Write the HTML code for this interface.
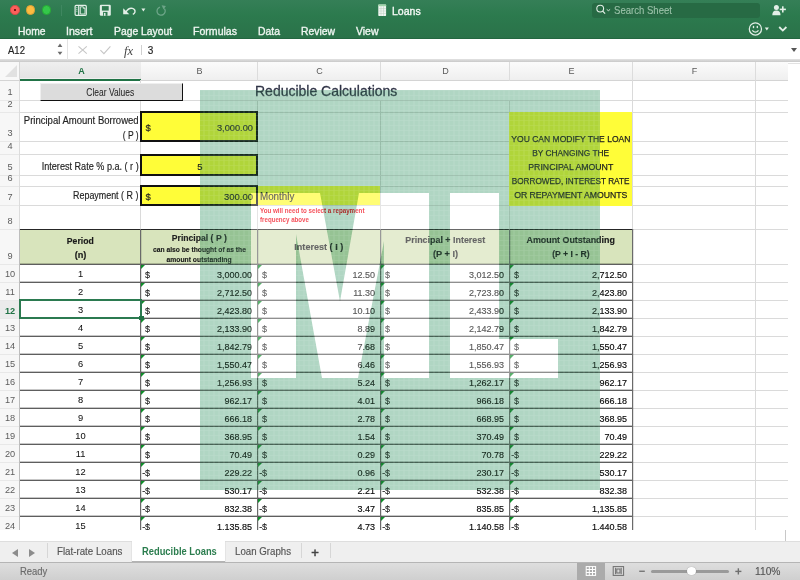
<!DOCTYPE html><html><head><meta charset="utf-8"><style>
*{margin:0;padding:0;box-sizing:border-box}
html,body{width:800px;height:580px;overflow:hidden;background:#fff;font-family:"Liberation Sans", sans-serif;position:relative}
.a{position:absolute}
.t{position:absolute;white-space:pre;line-height:1}
</style></head><body><div class="a" style="left:0px;top:0px;width:800px;height:38px;background:linear-gradient(#357f57,#2c7a4e 40%,#2a7249)"></div>
<div class="a" style="left:0px;top:38px;width:800px;height:1px;background:#236640"></div>
<div class="a" style="left:10.0px;top:5.25px;width:9.5px;height:9.5px;border-radius:50%;background:#fc605c;border:0.5px solid #de4a46"></div>
<div class="a" style="left:25.85px;top:5.25px;width:9.5px;height:9.5px;border-radius:50%;background:#fdbc40;border:0.5px solid #dea236"></div>
<div class="a" style="left:41.5px;top:5.25px;width:9.5px;height:9.5px;border-radius:50%;background:#34c84a;border:0.5px solid #27aa35"></div>
<div class="a" style="left:13.5px;top:8.75px;width:2.5px;height:2.5px;border-radius:50%;background:#4d0000"></div>
<div class="a" style="left:61px;top:4.5px;width:1px;height:11.5px;background:#3f8760"></div>
<div class="t" style="left:17.50px;top:25.51px;font-size:10.5px;color:#eef5f0;transform:scaleX(0.9818);transform-origin:left center;-webkit-text-stroke:0.35px #eef5f0;">Home</div>
<div class="t" style="left:66.00px;top:25.51px;font-size:10.5px;color:#eef5f0;transform:scaleX(1.0091);transform-origin:left center;-webkit-text-stroke:0.35px #eef5f0;">Insert</div>
<div class="t" style="left:113.75px;top:25.51px;font-size:10.5px;color:#eef5f0;transform:scaleX(0.9836);transform-origin:left center;-webkit-text-stroke:0.35px #eef5f0;">Page Layout</div>
<div class="t" style="left:193.20px;top:25.51px;font-size:10.5px;color:#eef5f0;transform:scaleX(1.0055);transform-origin:left center;-webkit-text-stroke:0.35px #eef5f0;">Formulas</div>
<div class="t" style="left:257.80px;top:25.51px;font-size:10.5px;color:#eef5f0;transform:scaleX(0.9919);transform-origin:left center;-webkit-text-stroke:0.35px #eef5f0;">Data</div>
<div class="t" style="left:301.00px;top:25.51px;font-size:10.5px;color:#eef5f0;transform:scaleX(0.9876);transform-origin:left center;-webkit-text-stroke:0.35px #eef5f0;">Review</div>
<div class="t" style="left:355.50px;top:25.51px;font-size:10.5px;color:#eef5f0;transform:scaleX(0.9969);transform-origin:left center;-webkit-text-stroke:0.35px #eef5f0;">View</div>
<div class="t" style="left:392.25px;top:5.69px;font-size:11px;color:#f4f8f5;transform:scaleX(0.9592);transform-origin:left center;-webkit-text-stroke:0.35px #f4f8f5;">Loans</div>
<div class="a" style="left:592px;top:2.5px;width:167.5px;height:15px;border-radius:3px;background:#276a44"></div>
<div class="t" style="left:614.00px;top:4.91px;font-size:10.5px;color:#9cc2aa;transform:scaleX(0.9116);transform-origin:left center;-webkit-text-stroke:0.1px #9cc2aa;">Search Sheet</div>
<div class="a" style="left:791.2px;top:47.8px;width:0;height:0;border-top:4px solid #555;border-left:3px solid transparent;border-right:3px solid transparent"></div>
<div class="a" style="left:788px;top:63px;width:12px;height:1px;background:#e2e2e2"></div>
<div class="a" style="left:0px;top:59px;width:800px;height:3px;background:linear-gradient(#e2e2e2,#c9c9c9)"></div>
<div class="a" style="left:67px;top:39px;width:1px;height:21px;background:#e3e3e3"></div>
<div class="t" style="left:7.80px;top:45.83px;font-size:10px;color:#222;transform:scaleX(0.9554);transform-origin:left center;-webkit-text-stroke:0.15px #222;">A12</div>
<div class="a" style="left:141px;top:45px;width:1px;height:10px;background:#d0d0d0"></div>
<div class="t" style="left:147.75px;top:45.83px;font-size:10px;color:#222;-webkit-text-stroke:0.15px #222;">3</div>
<div class="a" style="left:0px;top:62px;width:788px;height:18px;background:linear-gradient(#fbfbfb,#efefef)"></div>
<div class="a" style="left:0px;top:80px;width:788px;height:1px;background:#d4d4d4"></div>
<div class="a" style="left:140px;top:62px;width:1px;height:18px;background:#dcdcdc"></div>
<div class="a" style="left:257px;top:62px;width:1px;height:18px;background:#dcdcdc"></div>
<div class="a" style="left:380px;top:62px;width:1px;height:18px;background:#dcdcdc"></div>
<div class="a" style="left:509px;top:62px;width:1px;height:18px;background:#dcdcdc"></div>
<div class="a" style="left:632px;top:62px;width:1px;height:18px;background:#dcdcdc"></div>
<div class="a" style="left:755px;top:62px;width:1px;height:18px;background:#dcdcdc"></div>
<div class="t" style="left:196.50px;top:66.98px;font-size:9px;color:#5a5a5a;">B</div>
<div class="t" style="left:316.25px;top:66.98px;font-size:9px;color:#5a5a5a;">C</div>
<div class="t" style="left:442.25px;top:66.98px;font-size:9px;color:#5a5a5a;">D</div>
<div class="t" style="left:568.50px;top:66.98px;font-size:9px;color:#5a5a5a;">E</div>
<div class="t" style="left:691.75px;top:66.98px;font-size:9px;color:#5a5a5a;">F</div>
<div class="a" style="left:20px;top:62px;width:121px;height:16px;background:linear-gradient(#efefef,#e4e4e4)"></div>
<div class="a" style="left:0px;top:62px;width:19px;height:18px;background:#f8f8f8"></div>
<div class="a" style="left:5.4px;top:65.4px;width:0;height:0;border-bottom:12.8px solid #e1e1e1;border-left:12.5px solid transparent"></div>
<div class="t" style="left:78.25px;top:66.78px;font-size:9px;color:#217346;font-weight:bold;">A</div>
<div class="a" style="left:20px;top:78.5px;width:121px;height:2px;background:#217346"></div>
<div class="a" style="left:19px;top:62px;width:1px;height:18px;background:#d6d6d6"></div>
<div class="a" style="left:20px;top:100px;width:768px;height:1px;background:#dadada"></div>
<div class="a" style="left:20px;top:112px;width:768px;height:1px;background:#dadada"></div>
<div class="a" style="left:20px;top:141px;width:768px;height:1px;background:#dadada"></div>
<div class="a" style="left:20px;top:154px;width:768px;height:1px;background:#dadada"></div>
<div class="a" style="left:20px;top:175px;width:768px;height:1px;background:#dadada"></div>
<div class="a" style="left:20px;top:186px;width:768px;height:1px;background:#dadada"></div>
<div class="a" style="left:20px;top:205px;width:768px;height:1px;background:#dadada"></div>
<div class="a" style="left:20px;top:229px;width:768px;height:1px;background:#dadada"></div>
<div class="a" style="left:20px;top:264px;width:768px;height:1px;background:#dadada"></div>
<div class="a" style="left:20px;top:282px;width:768px;height:1px;background:#dadada"></div>
<div class="a" style="left:20px;top:300px;width:768px;height:1px;background:#dadada"></div>
<div class="a" style="left:20px;top:318px;width:768px;height:1px;background:#dadada"></div>
<div class="a" style="left:20px;top:336px;width:768px;height:1px;background:#dadada"></div>
<div class="a" style="left:20px;top:354px;width:768px;height:1px;background:#dadada"></div>
<div class="a" style="left:20px;top:372px;width:768px;height:1px;background:#dadada"></div>
<div class="a" style="left:20px;top:390px;width:768px;height:1px;background:#dadada"></div>
<div class="a" style="left:20px;top:408px;width:768px;height:1px;background:#dadada"></div>
<div class="a" style="left:20px;top:426px;width:768px;height:1px;background:#dadada"></div>
<div class="a" style="left:20px;top:444px;width:768px;height:1px;background:#dadada"></div>
<div class="a" style="left:20px;top:462px;width:768px;height:1px;background:#dadada"></div>
<div class="a" style="left:20px;top:480px;width:768px;height:1px;background:#dadada"></div>
<div class="a" style="left:20px;top:498px;width:768px;height:1px;background:#dadada"></div>
<div class="a" style="left:20px;top:516px;width:768px;height:1px;background:#dadada"></div>
<div class="a" style="left:20px;top:534px;width:768px;height:1px;background:#dadada"></div>
<div class="a" style="left:140px;top:80px;width:1px;height:450px;background:#dadada"></div>
<div class="a" style="left:257px;top:80px;width:1px;height:450px;background:#dadada"></div>
<div class="a" style="left:380px;top:80px;width:1px;height:450px;background:#dadada"></div>
<div class="a" style="left:509px;top:80px;width:1px;height:450px;background:#dadada"></div>
<div class="a" style="left:632px;top:80px;width:1px;height:450px;background:#dadada"></div>
<div class="a" style="left:755px;top:80px;width:1px;height:450px;background:#dadada"></div>
<div class="a" style="left:0px;top:81px;width:20px;height:449px;background:#f7f7f7"></div>
<div class="a" style="left:19px;top:81px;width:1px;height:449px;background:#dcdcdc"></div>
<div class="a" style="left:0px;top:100px;width:19px;height:1px;background:#e8e8e8"></div>
<div class="t" style="left:7.44px;top:88.41px;font-size:9.2px;color:#5c5c5c;">1</div>
<div class="a" style="left:0px;top:112px;width:19px;height:1px;background:#e8e8e8"></div>
<div class="t" style="left:7.44px;top:100.41px;font-size:9.2px;color:#5c5c5c;">2</div>
<div class="a" style="left:0px;top:141px;width:19px;height:1px;background:#e8e8e8"></div>
<div class="t" style="left:7.44px;top:129.41px;font-size:9.2px;color:#5c5c5c;">3</div>
<div class="a" style="left:0px;top:154px;width:19px;height:1px;background:#e8e8e8"></div>
<div class="t" style="left:7.44px;top:142.41px;font-size:9.2px;color:#5c5c5c;">4</div>
<div class="a" style="left:0px;top:175px;width:19px;height:1px;background:#e8e8e8"></div>
<div class="t" style="left:7.44px;top:163.41px;font-size:9.2px;color:#5c5c5c;">5</div>
<div class="a" style="left:0px;top:186px;width:19px;height:1px;background:#e8e8e8"></div>
<div class="t" style="left:7.44px;top:174.41px;font-size:9.2px;color:#5c5c5c;">6</div>
<div class="a" style="left:0px;top:205px;width:19px;height:1px;background:#e8e8e8"></div>
<div class="t" style="left:7.44px;top:193.41px;font-size:9.2px;color:#5c5c5c;">7</div>
<div class="a" style="left:0px;top:229px;width:19px;height:1px;background:#e8e8e8"></div>
<div class="t" style="left:7.44px;top:217.41px;font-size:9.2px;color:#5c5c5c;">8</div>
<div class="a" style="left:0px;top:264px;width:19px;height:1px;background:#e8e8e8"></div>
<div class="t" style="left:7.44px;top:252.41px;font-size:9.2px;color:#5c5c5c;">9</div>
<div class="a" style="left:0px;top:282px;width:19px;height:1px;background:#e8e8e8"></div>
<div class="t" style="left:4.88px;top:270.41px;font-size:9.2px;color:#5c5c5c;">10</div>
<div class="a" style="left:0px;top:300px;width:19px;height:1px;background:#e8e8e8"></div>
<div class="t" style="left:5.22px;top:288.41px;font-size:9.2px;color:#5c5c5c;">11</div>
<div class="a" style="left:0px;top:301px;width:19px;height:17px;background:#ebebeb"></div>
<div class="a" style="left:0px;top:318px;width:19px;height:1px;background:#e8e8e8"></div>
<div class="t" style="left:4.88px;top:306.61px;font-size:9.2px;color:#217346;font-weight:bold;">12</div>
<div class="a" style="left:0px;top:336px;width:19px;height:1px;background:#e8e8e8"></div>
<div class="t" style="left:4.88px;top:324.41px;font-size:9.2px;color:#5c5c5c;">13</div>
<div class="a" style="left:0px;top:354px;width:19px;height:1px;background:#e8e8e8"></div>
<div class="t" style="left:4.88px;top:342.41px;font-size:9.2px;color:#5c5c5c;">14</div>
<div class="a" style="left:0px;top:372px;width:19px;height:1px;background:#e8e8e8"></div>
<div class="t" style="left:4.88px;top:360.41px;font-size:9.2px;color:#5c5c5c;">15</div>
<div class="a" style="left:0px;top:390px;width:19px;height:1px;background:#e8e8e8"></div>
<div class="t" style="left:4.88px;top:378.41px;font-size:9.2px;color:#5c5c5c;">16</div>
<div class="a" style="left:0px;top:408px;width:19px;height:1px;background:#e8e8e8"></div>
<div class="t" style="left:4.88px;top:396.41px;font-size:9.2px;color:#5c5c5c;">17</div>
<div class="a" style="left:0px;top:426px;width:19px;height:1px;background:#e8e8e8"></div>
<div class="t" style="left:4.88px;top:414.41px;font-size:9.2px;color:#5c5c5c;">18</div>
<div class="a" style="left:0px;top:444px;width:19px;height:1px;background:#e8e8e8"></div>
<div class="t" style="left:4.88px;top:432.41px;font-size:9.2px;color:#5c5c5c;">19</div>
<div class="a" style="left:0px;top:462px;width:19px;height:1px;background:#e8e8e8"></div>
<div class="t" style="left:4.88px;top:450.41px;font-size:9.2px;color:#5c5c5c;">20</div>
<div class="a" style="left:0px;top:480px;width:19px;height:1px;background:#e8e8e8"></div>
<div class="t" style="left:4.88px;top:468.41px;font-size:9.2px;color:#5c5c5c;">21</div>
<div class="a" style="left:0px;top:498px;width:19px;height:1px;background:#e8e8e8"></div>
<div class="t" style="left:4.88px;top:486.41px;font-size:9.2px;color:#5c5c5c;">22</div>
<div class="a" style="left:0px;top:516px;width:19px;height:1px;background:#e8e8e8"></div>
<div class="t" style="left:4.88px;top:504.41px;font-size:9.2px;color:#5c5c5c;">23</div>
<div class="a" style="left:0px;top:534px;width:19px;height:1px;background:#e8e8e8"></div>
<div class="t" style="left:4.88px;top:522.41px;font-size:9.2px;color:#5c5c5c;">24</div>
<div class="a" style="left:200px;top:81px;width:400px;height:19px;background:#fff"></div>
<div class="a" style="left:39.6px;top:83.3px;width:143px;height:18.1px;background:#dcdcdc;border-top:1px solid #efefef;border-left:1px solid #efefef;border-right:1.5px solid #111;border-bottom:1.5px solid #111"></div>
<div class="t" style="left:81.94px;top:87.83px;font-size:10px;color:#262626;transform:scaleX(0.8459);transform-origin:center center;-webkit-text-stroke:0.05px #262626;">Clear Values</div>
<div class="t" style="left:254.90px;top:82.70px;font-size:15px;color:#2e3245;transform:scaleX(0.9326);transform-origin:left center;-webkit-text-stroke:0.3px #2e3245;">Reducible Calculations</div>
<div class="t" style="left:17.68px;top:115.94px;font-size:10px;color:#222;transform:scaleX(0.9517);transform-origin:right center;-webkit-text-stroke:0.15px #222;">Principal Amount Borrowed</div>
<div class="t" style="left:119.59px;top:130.53px;font-size:10px;color:#222;transform:scaleX(0.8553);transform-origin:right center;-webkit-text-stroke:0.15px #222;">( P )</div>
<div class="t" style="left:31.60px;top:161.53px;font-size:10px;color:#222;transform:scaleX(0.9091);transform-origin:right center;-webkit-text-stroke:0.15px #222;">Interest Rate % p.a. ( r )</div>
<div class="t" style="left:64.94px;top:190.94px;font-size:10px;color:#222;transform:scaleX(0.8902);transform-origin:right center;-webkit-text-stroke:0.15px #222;">Repayment ( R )</div>
<div class="a" style="left:140px;top:111px;width:118px;height:31px;background:#fffd38;border:2px solid #111"></div>
<div class="a" style="left:140px;top:154px;width:118px;height:22px;background:#fffd38;border:2px solid #111"></div>
<div class="a" style="left:140px;top:185px;width:118px;height:21px;background:#fffd38;border:2px solid #111"></div>
<div class="t" style="left:145.50px;top:123.16px;font-size:9.5px;color:#222;-webkit-text-stroke:0.15px #222;">$</div>
<div class="t" style="left:216.02px;top:123.16px;font-size:9.5px;color:#222;transform:scaleX(0.9735);transform-origin:right center;-webkit-text-stroke:0.15px #222;">3,000.00</div>
<div class="t" style="left:197.16px;top:161.96px;font-size:9.5px;color:#222;-webkit-text-stroke:0.15px #222;">5</div>
<div class="t" style="left:145.50px;top:191.96px;font-size:9.5px;color:#222;-webkit-text-stroke:0.15px #222;">$</div>
<div class="t" style="left:223.94px;top:191.96px;font-size:9.5px;color:#222;-webkit-text-stroke:0.15px #222;">300.00</div>
<div class="a" style="left:258px;top:186px;width:122px;height:18.5px;background:#fffd38"></div>
<div class="t" style="left:260.30px;top:192.03px;font-size:10px;color:#222;transform:scaleX(0.9796);transform-origin:left center;-webkit-text-stroke:0.15px #222;">Monthly</div>
<div class="t" style="left:260.00px;top:208.04px;font-size:6.8px;color:#f00010;font-weight:bold;transform:scaleX(0.9136);transform-origin:left center;">You will need to select a repayment</div>
<div class="t" style="left:260.00px;top:217.24px;font-size:6.8px;color:#f00010;font-weight:bold;transform:scaleX(0.9067);transform-origin:left center;">frequency above</div>
<div class="a" style="left:509px;top:112px;width:123px;height:93.5px;background:#fffd38"></div>
<div class="t" style="left:508.15px;top:134.58px;font-size:9px;color:#1e1e1e;transform:scaleX(0.9468);transform-origin:center center;-webkit-text-stroke:0.25px #1e1e1e;">YOU CAN MODIFY THE LOAN</div>
<div class="t" style="left:529.41px;top:148.78px;font-size:9px;color:#1e1e1e;transform:scaleX(0.9244);transform-origin:center center;-webkit-text-stroke:0.25px #1e1e1e;">BY CHANGING THE</div>
<div class="t" style="left:527.24px;top:162.98px;font-size:9px;color:#1e1e1e;transform:scaleX(0.9713);transform-origin:center center;-webkit-text-stroke:0.25px #1e1e1e;">PRINCIPAL AMOUNT</div>
<div class="t" style="left:506.41px;top:177.18px;font-size:9px;color:#1e1e1e;transform:scaleX(0.9111);transform-origin:center center;-webkit-text-stroke:0.25px #1e1e1e;">BORROWED, INTEREST RATE</div>
<div class="t" style="left:512.24px;top:191.38px;font-size:9px;color:#1e1e1e;transform:scaleX(0.9637);transform-origin:center center;-webkit-text-stroke:0.25px #1e1e1e;">OR REPAYMENT AMOUNTS</div>
<div class="a" style="left:20px;top:229px;width:612px;height:35px;background:#d8e4bc"></div>
<div class="a" style="left:20px;top:228.6px;width:613px;height:1.4px;background:#262626"></div>
<div class="a" style="left:20px;top:264px;width:613px;height:1px;background:#5e5e5e"></div>
<div class="a" style="left:20px;top:263px;width:613px;height:1px;background:rgba(0,0,0,0.22)"></div>
<div class="a" style="left:20px;top:282px;width:613px;height:1px;background:#5e5e5e"></div>
<div class="a" style="left:20px;top:281px;width:613px;height:1px;background:rgba(0,0,0,0.22)"></div>
<div class="a" style="left:20px;top:300px;width:613px;height:1px;background:#5e5e5e"></div>
<div class="a" style="left:20px;top:299px;width:613px;height:1px;background:rgba(0,0,0,0.22)"></div>
<div class="a" style="left:20px;top:318px;width:613px;height:1px;background:#5e5e5e"></div>
<div class="a" style="left:20px;top:317px;width:613px;height:1px;background:rgba(0,0,0,0.22)"></div>
<div class="a" style="left:20px;top:336px;width:613px;height:1px;background:#5e5e5e"></div>
<div class="a" style="left:20px;top:335px;width:613px;height:1px;background:rgba(0,0,0,0.22)"></div>
<div class="a" style="left:20px;top:354px;width:613px;height:1px;background:#5e5e5e"></div>
<div class="a" style="left:20px;top:353px;width:613px;height:1px;background:rgba(0,0,0,0.22)"></div>
<div class="a" style="left:20px;top:372px;width:613px;height:1px;background:#5e5e5e"></div>
<div class="a" style="left:20px;top:371px;width:613px;height:1px;background:rgba(0,0,0,0.22)"></div>
<div class="a" style="left:20px;top:390px;width:613px;height:1px;background:#5e5e5e"></div>
<div class="a" style="left:20px;top:389px;width:613px;height:1px;background:rgba(0,0,0,0.22)"></div>
<div class="a" style="left:20px;top:408px;width:613px;height:1px;background:#5e5e5e"></div>
<div class="a" style="left:20px;top:407px;width:613px;height:1px;background:rgba(0,0,0,0.22)"></div>
<div class="a" style="left:20px;top:426px;width:613px;height:1px;background:#5e5e5e"></div>
<div class="a" style="left:20px;top:425px;width:613px;height:1px;background:rgba(0,0,0,0.22)"></div>
<div class="a" style="left:20px;top:444px;width:613px;height:1px;background:#5e5e5e"></div>
<div class="a" style="left:20px;top:443px;width:613px;height:1px;background:rgba(0,0,0,0.22)"></div>
<div class="a" style="left:20px;top:462px;width:613px;height:1px;background:#5e5e5e"></div>
<div class="a" style="left:20px;top:461px;width:613px;height:1px;background:rgba(0,0,0,0.22)"></div>
<div class="a" style="left:20px;top:480px;width:613px;height:1px;background:#5e5e5e"></div>
<div class="a" style="left:20px;top:479px;width:613px;height:1px;background:rgba(0,0,0,0.22)"></div>
<div class="a" style="left:20px;top:498px;width:613px;height:1px;background:#5e5e5e"></div>
<div class="a" style="left:20px;top:497px;width:613px;height:1px;background:rgba(0,0,0,0.22)"></div>
<div class="a" style="left:20px;top:516px;width:613px;height:1px;background:#5e5e5e"></div>
<div class="a" style="left:20px;top:515px;width:613px;height:1px;background:rgba(0,0,0,0.22)"></div>
<div class="a" style="left:20px;top:534px;width:613px;height:1px;background:#5e5e5e"></div>
<div class="a" style="left:20px;top:533px;width:613px;height:1px;background:rgba(0,0,0,0.22)"></div>
<div class="a" style="left:140px;top:229px;width:1px;height:301px;background:#6a6a6a"></div>
<div class="a" style="left:141px;top:229px;width:1px;height:301px;background:rgba(0,0,0,0.12)"></div>
<div class="a" style="left:257px;top:229px;width:1px;height:301px;background:#6a6a6a"></div>
<div class="a" style="left:258px;top:229px;width:1px;height:301px;background:rgba(0,0,0,0.12)"></div>
<div class="a" style="left:380px;top:229px;width:1px;height:301px;background:#6a6a6a"></div>
<div class="a" style="left:381px;top:229px;width:1px;height:301px;background:rgba(0,0,0,0.12)"></div>
<div class="a" style="left:509px;top:229px;width:1px;height:301px;background:#6a6a6a"></div>
<div class="a" style="left:510px;top:229px;width:1px;height:301px;background:rgba(0,0,0,0.12)"></div>
<div class="a" style="left:632px;top:229px;width:1px;height:301px;background:#6a6a6a"></div>
<div class="a" style="left:633px;top:229px;width:1px;height:301px;background:rgba(0,0,0,0.12)"></div>
<div class="a" style="left:19px;top:229px;width:1px;height:301px;background:#bdbdbd"></div>
<div class="t" style="left:66.19px;top:236.81px;font-size:9.2px;color:#1a1a1a;font-weight:bold;transform:scaleX(0.9431);transform-origin:center center;-webkit-text-stroke:0.15px #1a1a1a;">Period</div>
<div class="t" style="left:74.63px;top:250.81px;font-size:9.2px;color:#1a1a1a;font-weight:bold;-webkit-text-stroke:0.15px #1a1a1a;">(n)</div>
<div class="t" style="left:169.23px;top:232.66px;font-size:9.5px;color:#222;font-weight:bold;transform:scaleX(0.9086);transform-origin:center center;-webkit-text-stroke:0.15px #222;">Principal ( P )</div>
<div class="t" style="left:148.75px;top:245.62px;font-size:7.3px;color:#1a1a1a;font-weight:bold;transform:scaleX(0.9208);transform-origin:center center;-webkit-text-stroke:0.15px #1a1a1a;">can also be thought of as the</div>
<div class="t" style="left:164.42px;top:255.82px;font-size:7.3px;color:#1a1a1a;font-weight:bold;transform:scaleX(0.9265);transform-origin:center center;-webkit-text-stroke:0.15px #1a1a1a;">amount outstanding</div>
<div class="t" style="left:294.21px;top:243.21px;font-size:9.2px;color:#222;font-weight:bold;transform:scaleX(0.9882);transform-origin:center center;-webkit-text-stroke:0.15px #222;">Interest ( I )</div>
<div class="t" style="left:403.71px;top:235.71px;font-size:9.2px;color:#222;font-weight:bold;transform:scaleX(0.9688);transform-origin:center center;-webkit-text-stroke:0.15px #222;">Principal + Interest</div>
<div class="t" style="left:432.93px;top:249.71px;font-size:9.2px;color:#222;font-weight:bold;-webkit-text-stroke:0.15px #222;">(P + I)</div>
<div class="t" style="left:524.76px;top:236.41px;font-size:9.2px;color:#1a1a1a;font-weight:bold;transform:scaleX(0.9675);transform-origin:center center;-webkit-text-stroke:0.15px #1a1a1a;">Amount Outstanding</div>
<div class="t" style="left:550.52px;top:250.41px;font-size:9.2px;color:#1a1a1a;font-weight:bold;transform:scaleX(0.9385);transform-origin:center center;-webkit-text-stroke:0.15px #1a1a1a;">(P + I - R)</div>
<div class="t" style="left:77.91px;top:270.13px;font-size:9.3px;color:#111;-webkit-text-stroke:0.05px #111;">1</div>
<div class="a" style="left:141px;top:265px;width:0;height:0;border-top:4.5px solid #0f8d2a;border-right:4.5px solid transparent"></div>
<div class="t" style="left:145.00px;top:270.98px;font-size:9px;color:#222;-webkit-text-stroke:0.12px #222;">$</div>
<div class="t" style="left:216.97px;top:270.98px;font-size:9px;color:#0a0a0a;-webkit-text-stroke:0.15px #0a0a0a;">3,000.00</div>
<div class="a" style="left:258px;top:265px;width:0;height:0;border-top:4.5px solid #0f8d2a;border-right:4.5px solid transparent"></div>
<div class="t" style="left:262.00px;top:270.98px;font-size:9px;color:#222;-webkit-text-stroke:0.12px #222;">$</div>
<div class="t" style="left:352.48px;top:270.98px;font-size:9px;color:#0a0a0a;-webkit-text-stroke:0.15px #0a0a0a;">12.50</div>
<div class="a" style="left:381px;top:265px;width:0;height:0;border-top:4.5px solid #0f8d2a;border-right:4.5px solid transparent"></div>
<div class="t" style="left:385.00px;top:270.98px;font-size:9px;color:#222;-webkit-text-stroke:0.12px #222;">$</div>
<div class="t" style="left:468.97px;top:270.98px;font-size:9px;color:#0a0a0a;-webkit-text-stroke:0.15px #0a0a0a;">3,012.50</div>
<div class="a" style="left:510px;top:265px;width:0;height:0;border-top:4.5px solid #0f8d2a;border-right:4.5px solid transparent"></div>
<div class="t" style="left:514.00px;top:270.98px;font-size:9px;color:#222;-webkit-text-stroke:0.12px #222;">$</div>
<div class="t" style="left:591.97px;top:270.98px;font-size:9px;color:#0a0a0a;-webkit-text-stroke:0.15px #0a0a0a;">2,712.50</div>
<div class="t" style="left:77.91px;top:288.13px;font-size:9.3px;color:#111;-webkit-text-stroke:0.05px #111;">2</div>
<div class="a" style="left:141px;top:283px;width:0;height:0;border-top:4.5px solid #0f8d2a;border-right:4.5px solid transparent"></div>
<div class="t" style="left:145.00px;top:288.98px;font-size:9px;color:#222;-webkit-text-stroke:0.12px #222;">$</div>
<div class="t" style="left:216.97px;top:288.98px;font-size:9px;color:#0a0a0a;-webkit-text-stroke:0.15px #0a0a0a;">2,712.50</div>
<div class="a" style="left:258px;top:283px;width:0;height:0;border-top:4.5px solid #0f8d2a;border-right:4.5px solid transparent"></div>
<div class="t" style="left:262.00px;top:288.98px;font-size:9px;color:#222;-webkit-text-stroke:0.12px #222;">$</div>
<div class="t" style="left:353.15px;top:288.98px;font-size:9px;color:#0a0a0a;-webkit-text-stroke:0.15px #0a0a0a;">11.30</div>
<div class="a" style="left:381px;top:283px;width:0;height:0;border-top:4.5px solid #0f8d2a;border-right:4.5px solid transparent"></div>
<div class="t" style="left:385.00px;top:288.98px;font-size:9px;color:#222;-webkit-text-stroke:0.12px #222;">$</div>
<div class="t" style="left:468.97px;top:288.98px;font-size:9px;color:#0a0a0a;-webkit-text-stroke:0.15px #0a0a0a;">2,723.80</div>
<div class="a" style="left:510px;top:283px;width:0;height:0;border-top:4.5px solid #0f8d2a;border-right:4.5px solid transparent"></div>
<div class="t" style="left:514.00px;top:288.98px;font-size:9px;color:#222;-webkit-text-stroke:0.12px #222;">$</div>
<div class="t" style="left:591.97px;top:288.98px;font-size:9px;color:#0a0a0a;-webkit-text-stroke:0.15px #0a0a0a;">2,423.80</div>
<div class="t" style="left:77.91px;top:306.13px;font-size:9.3px;color:#111;-webkit-text-stroke:0.05px #111;">3</div>
<div class="a" style="left:141px;top:301px;width:0;height:0;border-top:4.5px solid #0f8d2a;border-right:4.5px solid transparent"></div>
<div class="t" style="left:145.00px;top:306.98px;font-size:9px;color:#222;-webkit-text-stroke:0.12px #222;">$</div>
<div class="t" style="left:216.97px;top:306.98px;font-size:9px;color:#0a0a0a;-webkit-text-stroke:0.15px #0a0a0a;">2,423.80</div>
<div class="a" style="left:258px;top:301px;width:0;height:0;border-top:4.5px solid #0f8d2a;border-right:4.5px solid transparent"></div>
<div class="t" style="left:262.00px;top:306.98px;font-size:9px;color:#222;-webkit-text-stroke:0.12px #222;">$</div>
<div class="t" style="left:352.48px;top:306.98px;font-size:9px;color:#0a0a0a;-webkit-text-stroke:0.15px #0a0a0a;">10.10</div>
<div class="a" style="left:381px;top:301px;width:0;height:0;border-top:4.5px solid #0f8d2a;border-right:4.5px solid transparent"></div>
<div class="t" style="left:385.00px;top:306.98px;font-size:9px;color:#222;-webkit-text-stroke:0.12px #222;">$</div>
<div class="t" style="left:468.97px;top:306.98px;font-size:9px;color:#0a0a0a;-webkit-text-stroke:0.15px #0a0a0a;">2,433.90</div>
<div class="a" style="left:510px;top:301px;width:0;height:0;border-top:4.5px solid #0f8d2a;border-right:4.5px solid transparent"></div>
<div class="t" style="left:514.00px;top:306.98px;font-size:9px;color:#222;-webkit-text-stroke:0.12px #222;">$</div>
<div class="t" style="left:591.97px;top:306.98px;font-size:9px;color:#0a0a0a;-webkit-text-stroke:0.15px #0a0a0a;">2,133.90</div>
<div class="t" style="left:77.91px;top:324.13px;font-size:9.3px;color:#111;-webkit-text-stroke:0.05px #111;">4</div>
<div class="a" style="left:141px;top:319px;width:0;height:0;border-top:4.5px solid #0f8d2a;border-right:4.5px solid transparent"></div>
<div class="t" style="left:145.00px;top:324.98px;font-size:9px;color:#222;-webkit-text-stroke:0.12px #222;">$</div>
<div class="t" style="left:216.97px;top:324.98px;font-size:9px;color:#0a0a0a;-webkit-text-stroke:0.15px #0a0a0a;">2,133.90</div>
<div class="a" style="left:258px;top:319px;width:0;height:0;border-top:4.5px solid #0f8d2a;border-right:4.5px solid transparent"></div>
<div class="t" style="left:262.00px;top:324.98px;font-size:9px;color:#222;-webkit-text-stroke:0.12px #222;">$</div>
<div class="t" style="left:357.48px;top:324.98px;font-size:9px;color:#0a0a0a;-webkit-text-stroke:0.15px #0a0a0a;">8.89</div>
<div class="a" style="left:381px;top:319px;width:0;height:0;border-top:4.5px solid #0f8d2a;border-right:4.5px solid transparent"></div>
<div class="t" style="left:385.00px;top:324.98px;font-size:9px;color:#222;-webkit-text-stroke:0.12px #222;">$</div>
<div class="t" style="left:468.97px;top:324.98px;font-size:9px;color:#0a0a0a;-webkit-text-stroke:0.15px #0a0a0a;">2,142.79</div>
<div class="a" style="left:510px;top:319px;width:0;height:0;border-top:4.5px solid #0f8d2a;border-right:4.5px solid transparent"></div>
<div class="t" style="left:514.00px;top:324.98px;font-size:9px;color:#222;-webkit-text-stroke:0.12px #222;">$</div>
<div class="t" style="left:591.97px;top:324.98px;font-size:9px;color:#0a0a0a;-webkit-text-stroke:0.15px #0a0a0a;">1,842.79</div>
<div class="t" style="left:77.91px;top:342.13px;font-size:9.3px;color:#111;-webkit-text-stroke:0.05px #111;">5</div>
<div class="a" style="left:141px;top:337px;width:0;height:0;border-top:4.5px solid #0f8d2a;border-right:4.5px solid transparent"></div>
<div class="t" style="left:145.00px;top:342.98px;font-size:9px;color:#222;-webkit-text-stroke:0.12px #222;">$</div>
<div class="t" style="left:216.97px;top:342.98px;font-size:9px;color:#0a0a0a;-webkit-text-stroke:0.15px #0a0a0a;">1,842.79</div>
<div class="a" style="left:258px;top:337px;width:0;height:0;border-top:4.5px solid #0f8d2a;border-right:4.5px solid transparent"></div>
<div class="t" style="left:262.00px;top:342.98px;font-size:9px;color:#222;-webkit-text-stroke:0.12px #222;">$</div>
<div class="t" style="left:357.48px;top:342.98px;font-size:9px;color:#0a0a0a;-webkit-text-stroke:0.15px #0a0a0a;">7.68</div>
<div class="a" style="left:381px;top:337px;width:0;height:0;border-top:4.5px solid #0f8d2a;border-right:4.5px solid transparent"></div>
<div class="t" style="left:385.00px;top:342.98px;font-size:9px;color:#222;-webkit-text-stroke:0.12px #222;">$</div>
<div class="t" style="left:468.97px;top:342.98px;font-size:9px;color:#0a0a0a;-webkit-text-stroke:0.15px #0a0a0a;">1,850.47</div>
<div class="a" style="left:510px;top:337px;width:0;height:0;border-top:4.5px solid #0f8d2a;border-right:4.5px solid transparent"></div>
<div class="t" style="left:514.00px;top:342.98px;font-size:9px;color:#222;-webkit-text-stroke:0.12px #222;">$</div>
<div class="t" style="left:591.97px;top:342.98px;font-size:9px;color:#0a0a0a;-webkit-text-stroke:0.15px #0a0a0a;">1,550.47</div>
<div class="t" style="left:77.91px;top:360.13px;font-size:9.3px;color:#111;-webkit-text-stroke:0.05px #111;">6</div>
<div class="a" style="left:141px;top:355px;width:0;height:0;border-top:4.5px solid #0f8d2a;border-right:4.5px solid transparent"></div>
<div class="t" style="left:145.00px;top:360.98px;font-size:9px;color:#222;-webkit-text-stroke:0.12px #222;">$</div>
<div class="t" style="left:216.97px;top:360.98px;font-size:9px;color:#0a0a0a;-webkit-text-stroke:0.15px #0a0a0a;">1,550.47</div>
<div class="a" style="left:258px;top:355px;width:0;height:0;border-top:4.5px solid #0f8d2a;border-right:4.5px solid transparent"></div>
<div class="t" style="left:262.00px;top:360.98px;font-size:9px;color:#222;-webkit-text-stroke:0.12px #222;">$</div>
<div class="t" style="left:357.48px;top:360.98px;font-size:9px;color:#0a0a0a;-webkit-text-stroke:0.15px #0a0a0a;">6.46</div>
<div class="a" style="left:381px;top:355px;width:0;height:0;border-top:4.5px solid #0f8d2a;border-right:4.5px solid transparent"></div>
<div class="t" style="left:385.00px;top:360.98px;font-size:9px;color:#222;-webkit-text-stroke:0.12px #222;">$</div>
<div class="t" style="left:468.97px;top:360.98px;font-size:9px;color:#0a0a0a;-webkit-text-stroke:0.15px #0a0a0a;">1,556.93</div>
<div class="a" style="left:510px;top:355px;width:0;height:0;border-top:4.5px solid #0f8d2a;border-right:4.5px solid transparent"></div>
<div class="t" style="left:514.00px;top:360.98px;font-size:9px;color:#222;-webkit-text-stroke:0.12px #222;">$</div>
<div class="t" style="left:591.97px;top:360.98px;font-size:9px;color:#0a0a0a;-webkit-text-stroke:0.15px #0a0a0a;">1,256.93</div>
<div class="t" style="left:77.91px;top:378.13px;font-size:9.3px;color:#111;-webkit-text-stroke:0.05px #111;">7</div>
<div class="a" style="left:141px;top:373px;width:0;height:0;border-top:4.5px solid #0f8d2a;border-right:4.5px solid transparent"></div>
<div class="t" style="left:145.00px;top:378.98px;font-size:9px;color:#222;-webkit-text-stroke:0.12px #222;">$</div>
<div class="t" style="left:216.97px;top:378.98px;font-size:9px;color:#0a0a0a;-webkit-text-stroke:0.15px #0a0a0a;">1,256.93</div>
<div class="a" style="left:258px;top:373px;width:0;height:0;border-top:4.5px solid #0f8d2a;border-right:4.5px solid transparent"></div>
<div class="t" style="left:262.00px;top:378.98px;font-size:9px;color:#222;-webkit-text-stroke:0.12px #222;">$</div>
<div class="t" style="left:357.48px;top:378.98px;font-size:9px;color:#0a0a0a;-webkit-text-stroke:0.15px #0a0a0a;">5.24</div>
<div class="a" style="left:381px;top:373px;width:0;height:0;border-top:4.5px solid #0f8d2a;border-right:4.5px solid transparent"></div>
<div class="t" style="left:385.00px;top:378.98px;font-size:9px;color:#222;-webkit-text-stroke:0.12px #222;">$</div>
<div class="t" style="left:468.97px;top:378.98px;font-size:9px;color:#0a0a0a;-webkit-text-stroke:0.15px #0a0a0a;">1,262.17</div>
<div class="a" style="left:510px;top:373px;width:0;height:0;border-top:4.5px solid #0f8d2a;border-right:4.5px solid transparent"></div>
<div class="t" style="left:514.00px;top:378.98px;font-size:9px;color:#222;-webkit-text-stroke:0.12px #222;">$</div>
<div class="t" style="left:599.47px;top:378.98px;font-size:9px;color:#0a0a0a;-webkit-text-stroke:0.15px #0a0a0a;">962.17</div>
<div class="t" style="left:77.91px;top:396.13px;font-size:9.3px;color:#111;-webkit-text-stroke:0.05px #111;">8</div>
<div class="a" style="left:141px;top:391px;width:0;height:0;border-top:4.5px solid #0f8d2a;border-right:4.5px solid transparent"></div>
<div class="t" style="left:145.00px;top:396.98px;font-size:9px;color:#222;-webkit-text-stroke:0.12px #222;">$</div>
<div class="t" style="left:224.47px;top:396.98px;font-size:9px;color:#0a0a0a;-webkit-text-stroke:0.15px #0a0a0a;">962.17</div>
<div class="a" style="left:258px;top:391px;width:0;height:0;border-top:4.5px solid #0f8d2a;border-right:4.5px solid transparent"></div>
<div class="t" style="left:262.00px;top:396.98px;font-size:9px;color:#222;-webkit-text-stroke:0.12px #222;">$</div>
<div class="t" style="left:357.48px;top:396.98px;font-size:9px;color:#0a0a0a;-webkit-text-stroke:0.15px #0a0a0a;">4.01</div>
<div class="a" style="left:381px;top:391px;width:0;height:0;border-top:4.5px solid #0f8d2a;border-right:4.5px solid transparent"></div>
<div class="t" style="left:385.00px;top:396.98px;font-size:9px;color:#222;-webkit-text-stroke:0.12px #222;">$</div>
<div class="t" style="left:476.47px;top:396.98px;font-size:9px;color:#0a0a0a;-webkit-text-stroke:0.15px #0a0a0a;">966.18</div>
<div class="a" style="left:510px;top:391px;width:0;height:0;border-top:4.5px solid #0f8d2a;border-right:4.5px solid transparent"></div>
<div class="t" style="left:514.00px;top:396.98px;font-size:9px;color:#222;-webkit-text-stroke:0.12px #222;">$</div>
<div class="t" style="left:599.47px;top:396.98px;font-size:9px;color:#0a0a0a;-webkit-text-stroke:0.15px #0a0a0a;">666.18</div>
<div class="t" style="left:77.91px;top:414.13px;font-size:9.3px;color:#111;-webkit-text-stroke:0.05px #111;">9</div>
<div class="a" style="left:141px;top:409px;width:0;height:0;border-top:4.5px solid #0f8d2a;border-right:4.5px solid transparent"></div>
<div class="t" style="left:145.00px;top:414.98px;font-size:9px;color:#222;-webkit-text-stroke:0.12px #222;">$</div>
<div class="t" style="left:224.47px;top:414.98px;font-size:9px;color:#0a0a0a;-webkit-text-stroke:0.15px #0a0a0a;">666.18</div>
<div class="a" style="left:258px;top:409px;width:0;height:0;border-top:4.5px solid #0f8d2a;border-right:4.5px solid transparent"></div>
<div class="t" style="left:262.00px;top:414.98px;font-size:9px;color:#222;-webkit-text-stroke:0.12px #222;">$</div>
<div class="t" style="left:357.48px;top:414.98px;font-size:9px;color:#0a0a0a;-webkit-text-stroke:0.15px #0a0a0a;">2.78</div>
<div class="a" style="left:381px;top:409px;width:0;height:0;border-top:4.5px solid #0f8d2a;border-right:4.5px solid transparent"></div>
<div class="t" style="left:385.00px;top:414.98px;font-size:9px;color:#222;-webkit-text-stroke:0.12px #222;">$</div>
<div class="t" style="left:476.47px;top:414.98px;font-size:9px;color:#0a0a0a;-webkit-text-stroke:0.15px #0a0a0a;">668.95</div>
<div class="a" style="left:510px;top:409px;width:0;height:0;border-top:4.5px solid #0f8d2a;border-right:4.5px solid transparent"></div>
<div class="t" style="left:514.00px;top:414.98px;font-size:9px;color:#222;-webkit-text-stroke:0.12px #222;">$</div>
<div class="t" style="left:599.47px;top:414.98px;font-size:9px;color:#0a0a0a;-webkit-text-stroke:0.15px #0a0a0a;">368.95</div>
<div class="t" style="left:75.33px;top:432.13px;font-size:9.3px;color:#111;-webkit-text-stroke:0.05px #111;">10</div>
<div class="a" style="left:141px;top:427px;width:0;height:0;border-top:4.5px solid #0f8d2a;border-right:4.5px solid transparent"></div>
<div class="t" style="left:145.00px;top:432.98px;font-size:9px;color:#222;-webkit-text-stroke:0.12px #222;">$</div>
<div class="t" style="left:224.47px;top:432.98px;font-size:9px;color:#0a0a0a;-webkit-text-stroke:0.15px #0a0a0a;">368.95</div>
<div class="a" style="left:258px;top:427px;width:0;height:0;border-top:4.5px solid #0f8d2a;border-right:4.5px solid transparent"></div>
<div class="t" style="left:262.00px;top:432.98px;font-size:9px;color:#222;-webkit-text-stroke:0.12px #222;">$</div>
<div class="t" style="left:357.48px;top:432.98px;font-size:9px;color:#0a0a0a;-webkit-text-stroke:0.15px #0a0a0a;">1.54</div>
<div class="a" style="left:381px;top:427px;width:0;height:0;border-top:4.5px solid #0f8d2a;border-right:4.5px solid transparent"></div>
<div class="t" style="left:385.00px;top:432.98px;font-size:9px;color:#222;-webkit-text-stroke:0.12px #222;">$</div>
<div class="t" style="left:476.47px;top:432.98px;font-size:9px;color:#0a0a0a;-webkit-text-stroke:0.15px #0a0a0a;">370.49</div>
<div class="a" style="left:510px;top:427px;width:0;height:0;border-top:4.5px solid #0f8d2a;border-right:4.5px solid transparent"></div>
<div class="t" style="left:514.00px;top:432.98px;font-size:9px;color:#222;-webkit-text-stroke:0.12px #222;">$</div>
<div class="t" style="left:604.48px;top:432.98px;font-size:9px;color:#0a0a0a;-webkit-text-stroke:0.15px #0a0a0a;">70.49</div>
<div class="t" style="left:75.67px;top:450.13px;font-size:9.3px;color:#111;-webkit-text-stroke:0.05px #111;">11</div>
<div class="a" style="left:141px;top:445px;width:0;height:0;border-top:4.5px solid #0f8d2a;border-right:4.5px solid transparent"></div>
<div class="t" style="left:145.00px;top:450.98px;font-size:9px;color:#222;-webkit-text-stroke:0.12px #222;">$</div>
<div class="t" style="left:229.48px;top:450.98px;font-size:9px;color:#0a0a0a;-webkit-text-stroke:0.15px #0a0a0a;">70.49</div>
<div class="a" style="left:258px;top:445px;width:0;height:0;border-top:4.5px solid #0f8d2a;border-right:4.5px solid transparent"></div>
<div class="t" style="left:262.00px;top:450.98px;font-size:9px;color:#222;-webkit-text-stroke:0.12px #222;">$</div>
<div class="t" style="left:357.48px;top:450.98px;font-size:9px;color:#0a0a0a;-webkit-text-stroke:0.15px #0a0a0a;">0.29</div>
<div class="a" style="left:381px;top:445px;width:0;height:0;border-top:4.5px solid #0f8d2a;border-right:4.5px solid transparent"></div>
<div class="t" style="left:385.00px;top:450.98px;font-size:9px;color:#222;-webkit-text-stroke:0.12px #222;">$</div>
<div class="t" style="left:481.48px;top:450.98px;font-size:9px;color:#0a0a0a;-webkit-text-stroke:0.15px #0a0a0a;">70.78</div>
<div class="a" style="left:510px;top:445px;width:0;height:0;border-top:4.5px solid #0f8d2a;border-right:4.5px solid transparent"></div>
<div class="t" style="left:511.20px;top:450.98px;font-size:9px;color:#222;-webkit-text-stroke:0.12px #222;">-</div>
<div class="t" style="left:514.00px;top:450.98px;font-size:9px;color:#222;-webkit-text-stroke:0.12px #222;">$</div>
<div class="t" style="left:599.47px;top:450.98px;font-size:9px;color:#0a0a0a;-webkit-text-stroke:0.15px #0a0a0a;">229.22</div>
<div class="t" style="left:75.33px;top:468.13px;font-size:9.3px;color:#111;-webkit-text-stroke:0.05px #111;">12</div>
<div class="a" style="left:141px;top:463px;width:0;height:0;border-top:4.5px solid #0f8d2a;border-right:4.5px solid transparent"></div>
<div class="t" style="left:142.20px;top:468.98px;font-size:9px;color:#222;-webkit-text-stroke:0.12px #222;">-</div>
<div class="t" style="left:145.00px;top:468.98px;font-size:9px;color:#222;-webkit-text-stroke:0.12px #222;">$</div>
<div class="t" style="left:224.47px;top:468.98px;font-size:9px;color:#0a0a0a;-webkit-text-stroke:0.15px #0a0a0a;">229.22</div>
<div class="a" style="left:258px;top:463px;width:0;height:0;border-top:4.5px solid #0f8d2a;border-right:4.5px solid transparent"></div>
<div class="t" style="left:259.20px;top:468.98px;font-size:9px;color:#222;-webkit-text-stroke:0.12px #222;">-</div>
<div class="t" style="left:262.00px;top:468.98px;font-size:9px;color:#222;-webkit-text-stroke:0.12px #222;">$</div>
<div class="t" style="left:357.48px;top:468.98px;font-size:9px;color:#0a0a0a;-webkit-text-stroke:0.15px #0a0a0a;">0.96</div>
<div class="a" style="left:381px;top:463px;width:0;height:0;border-top:4.5px solid #0f8d2a;border-right:4.5px solid transparent"></div>
<div class="t" style="left:382.20px;top:468.98px;font-size:9px;color:#222;-webkit-text-stroke:0.12px #222;">-</div>
<div class="t" style="left:385.00px;top:468.98px;font-size:9px;color:#222;-webkit-text-stroke:0.12px #222;">$</div>
<div class="t" style="left:476.47px;top:468.98px;font-size:9px;color:#0a0a0a;-webkit-text-stroke:0.15px #0a0a0a;">230.17</div>
<div class="a" style="left:510px;top:463px;width:0;height:0;border-top:4.5px solid #0f8d2a;border-right:4.5px solid transparent"></div>
<div class="t" style="left:511.20px;top:468.98px;font-size:9px;color:#222;-webkit-text-stroke:0.12px #222;">-</div>
<div class="t" style="left:514.00px;top:468.98px;font-size:9px;color:#222;-webkit-text-stroke:0.12px #222;">$</div>
<div class="t" style="left:599.47px;top:468.98px;font-size:9px;color:#0a0a0a;-webkit-text-stroke:0.15px #0a0a0a;">530.17</div>
<div class="t" style="left:75.33px;top:486.13px;font-size:9.3px;color:#111;-webkit-text-stroke:0.05px #111;">13</div>
<div class="a" style="left:141px;top:481px;width:0;height:0;border-top:4.5px solid #0f8d2a;border-right:4.5px solid transparent"></div>
<div class="t" style="left:142.20px;top:486.98px;font-size:9px;color:#222;-webkit-text-stroke:0.12px #222;">-</div>
<div class="t" style="left:145.00px;top:486.98px;font-size:9px;color:#222;-webkit-text-stroke:0.12px #222;">$</div>
<div class="t" style="left:224.47px;top:486.98px;font-size:9px;color:#0a0a0a;-webkit-text-stroke:0.15px #0a0a0a;">530.17</div>
<div class="a" style="left:258px;top:481px;width:0;height:0;border-top:4.5px solid #0f8d2a;border-right:4.5px solid transparent"></div>
<div class="t" style="left:259.20px;top:486.98px;font-size:9px;color:#222;-webkit-text-stroke:0.12px #222;">-</div>
<div class="t" style="left:262.00px;top:486.98px;font-size:9px;color:#222;-webkit-text-stroke:0.12px #222;">$</div>
<div class="t" style="left:357.48px;top:486.98px;font-size:9px;color:#0a0a0a;-webkit-text-stroke:0.15px #0a0a0a;">2.21</div>
<div class="a" style="left:381px;top:481px;width:0;height:0;border-top:4.5px solid #0f8d2a;border-right:4.5px solid transparent"></div>
<div class="t" style="left:382.20px;top:486.98px;font-size:9px;color:#222;-webkit-text-stroke:0.12px #222;">-</div>
<div class="t" style="left:385.00px;top:486.98px;font-size:9px;color:#222;-webkit-text-stroke:0.12px #222;">$</div>
<div class="t" style="left:476.47px;top:486.98px;font-size:9px;color:#0a0a0a;-webkit-text-stroke:0.15px #0a0a0a;">532.38</div>
<div class="a" style="left:510px;top:481px;width:0;height:0;border-top:4.5px solid #0f8d2a;border-right:4.5px solid transparent"></div>
<div class="t" style="left:511.20px;top:486.98px;font-size:9px;color:#222;-webkit-text-stroke:0.12px #222;">-</div>
<div class="t" style="left:514.00px;top:486.98px;font-size:9px;color:#222;-webkit-text-stroke:0.12px #222;">$</div>
<div class="t" style="left:599.47px;top:486.98px;font-size:9px;color:#0a0a0a;-webkit-text-stroke:0.15px #0a0a0a;">832.38</div>
<div class="t" style="left:75.33px;top:504.13px;font-size:9.3px;color:#111;-webkit-text-stroke:0.05px #111;">14</div>
<div class="a" style="left:141px;top:499px;width:0;height:0;border-top:4.5px solid #0f8d2a;border-right:4.5px solid transparent"></div>
<div class="t" style="left:142.20px;top:504.98px;font-size:9px;color:#222;-webkit-text-stroke:0.12px #222;">-</div>
<div class="t" style="left:145.00px;top:504.98px;font-size:9px;color:#222;-webkit-text-stroke:0.12px #222;">$</div>
<div class="t" style="left:224.47px;top:504.98px;font-size:9px;color:#0a0a0a;-webkit-text-stroke:0.15px #0a0a0a;">832.38</div>
<div class="a" style="left:258px;top:499px;width:0;height:0;border-top:4.5px solid #0f8d2a;border-right:4.5px solid transparent"></div>
<div class="t" style="left:259.20px;top:504.98px;font-size:9px;color:#222;-webkit-text-stroke:0.12px #222;">-</div>
<div class="t" style="left:262.00px;top:504.98px;font-size:9px;color:#222;-webkit-text-stroke:0.12px #222;">$</div>
<div class="t" style="left:357.48px;top:504.98px;font-size:9px;color:#0a0a0a;-webkit-text-stroke:0.15px #0a0a0a;">3.47</div>
<div class="a" style="left:381px;top:499px;width:0;height:0;border-top:4.5px solid #0f8d2a;border-right:4.5px solid transparent"></div>
<div class="t" style="left:382.20px;top:504.98px;font-size:9px;color:#222;-webkit-text-stroke:0.12px #222;">-</div>
<div class="t" style="left:385.00px;top:504.98px;font-size:9px;color:#222;-webkit-text-stroke:0.12px #222;">$</div>
<div class="t" style="left:476.47px;top:504.98px;font-size:9px;color:#0a0a0a;-webkit-text-stroke:0.15px #0a0a0a;">835.85</div>
<div class="a" style="left:510px;top:499px;width:0;height:0;border-top:4.5px solid #0f8d2a;border-right:4.5px solid transparent"></div>
<div class="t" style="left:511.20px;top:504.98px;font-size:9px;color:#222;-webkit-text-stroke:0.12px #222;">-</div>
<div class="t" style="left:514.00px;top:504.98px;font-size:9px;color:#222;-webkit-text-stroke:0.12px #222;">$</div>
<div class="t" style="left:591.97px;top:504.98px;font-size:9px;color:#0a0a0a;-webkit-text-stroke:0.15px #0a0a0a;">1,135.85</div>
<div class="t" style="left:75.33px;top:522.13px;font-size:9.3px;color:#111;-webkit-text-stroke:0.05px #111;">15</div>
<div class="a" style="left:141px;top:517px;width:0;height:0;border-top:4.5px solid #0f8d2a;border-right:4.5px solid transparent"></div>
<div class="t" style="left:142.20px;top:522.98px;font-size:9px;color:#222;-webkit-text-stroke:0.12px #222;">-</div>
<div class="t" style="left:145.00px;top:522.98px;font-size:9px;color:#222;-webkit-text-stroke:0.12px #222;">$</div>
<div class="t" style="left:216.97px;top:522.98px;font-size:9px;color:#0a0a0a;-webkit-text-stroke:0.15px #0a0a0a;">1,135.85</div>
<div class="a" style="left:258px;top:517px;width:0;height:0;border-top:4.5px solid #0f8d2a;border-right:4.5px solid transparent"></div>
<div class="t" style="left:259.20px;top:522.98px;font-size:9px;color:#222;-webkit-text-stroke:0.12px #222;">-</div>
<div class="t" style="left:262.00px;top:522.98px;font-size:9px;color:#222;-webkit-text-stroke:0.12px #222;">$</div>
<div class="t" style="left:357.48px;top:522.98px;font-size:9px;color:#0a0a0a;-webkit-text-stroke:0.15px #0a0a0a;">4.73</div>
<div class="a" style="left:381px;top:517px;width:0;height:0;border-top:4.5px solid #0f8d2a;border-right:4.5px solid transparent"></div>
<div class="t" style="left:382.20px;top:522.98px;font-size:9px;color:#222;-webkit-text-stroke:0.12px #222;">-</div>
<div class="t" style="left:385.00px;top:522.98px;font-size:9px;color:#222;-webkit-text-stroke:0.12px #222;">$</div>
<div class="t" style="left:468.97px;top:522.98px;font-size:9px;color:#0a0a0a;-webkit-text-stroke:0.15px #0a0a0a;">1,140.58</div>
<div class="a" style="left:510px;top:517px;width:0;height:0;border-top:4.5px solid #0f8d2a;border-right:4.5px solid transparent"></div>
<div class="t" style="left:511.20px;top:522.98px;font-size:9px;color:#222;-webkit-text-stroke:0.12px #222;">-</div>
<div class="t" style="left:514.00px;top:522.98px;font-size:9px;color:#222;-webkit-text-stroke:0.12px #222;">$</div>
<div class="t" style="left:591.97px;top:522.98px;font-size:9px;color:#0a0a0a;-webkit-text-stroke:0.15px #0a0a0a;">1,440.58</div>
<div class="a" style="left:19px;top:299px;width:123px;height:20px;border:2px solid #2b7a50"></div>
<div class="a" style="left:139px;top:315.5px;width:4.5px;height:4.5px;background:#217346"></div>
<svg class="a" style="left:200px;top:90px;mix-blend-mode:multiply" width="400" height="400" viewBox="0 0 400 400"><path fill-rule="evenodd" fill="rgb(212,235,224)" d="M0 0H400V400H0Z M51 103H120L140 211.6L159 103H229V288H184V151L158 288H122L96 144V288H51Z M250 103H299V249H358V288H250Z"/></svg>
<svg class="a" style="left:200px;top:90px" width="400" height="400" viewBox="0 0 400 400"><defs><pattern id="pt" x="3.5" y="0" width="5" height="5" patternUnits="userSpaceOnUse"><rect x="0" y="0" width="1" height="5" fill="rgba(255,255,255,0.12)"/><rect x="1" y="0" width="4" height="1" fill="rgba(255,255,255,0.08)"/></pattern><clipPath id="cp"><path clip-rule="evenodd" d="M0 0H400V400H0Z M51 103H120L140 211.6L159 103H229V288H184V151L158 288H122L96 144V288H51Z M250 103H299V249H358V288H250Z"/></clipPath></defs><path fill-rule="evenodd" fill="rgba(52,141,93,0.22)" d="M0 0H400V400H0Z M51 103H120L140 211.6L159 103H229V288H184V151L158 288H122L96 144V288H51Z M250 103H299V249H358V288H250Z"/><rect width="400" height="400" fill="url(#pt)" clip-path="url(#cp)"/></svg>
<svg class="a" style="left:200px;top:90px" width="400" height="400" viewBox="0 0 400 400"><path fill="rgba(255,255,255,0.31)" d="M51 103H120L140 211.6L159 103H229V288H184V151L158 288H122L96 144V288H51Z M250 103H299V249H358V288H250Z"/></svg>
<svg class="a" style="left:0;top:0" width="800" height="40" viewBox="0 0 800 40">
<g fill="none" stroke="#e3efe7" stroke-width="1.2">
 <rect x="75.1" y="5.4" width="11.2" height="9.9" rx="1"/>
 <line x1="78.7" y1="5.4" x2="78.7" y2="15.3"/>
 <path d="M80.3 6.8H83.3L85 8.5V14H80.3Z" stroke-width="0.9"/>
 <path d="M83.3 6.8V8.5H85" stroke-width="0.7"/>
 <path d="M76.2 7.6H77.4M76.2 9.4H77.4M76.2 11.2H77.4" stroke-width="0.7"/>
 <path d="M125.8 12.2 Q128.5 7.6 132.4 8.4 Q135.6 9.3 134.9 12.3 Q134.4 13.7 132.8 14.3" stroke-width="1.4"/>
 <circle cx="600.2" cy="8.6" r="3.4" stroke-width="1.1"/>
 <line x1="602.7" y1="11.2" x2="605.1" y2="13.7" stroke-width="1.2"/>
 <path d="M606.7 9.4L608.4 10.7L610.1 9.4" stroke-width="0.9"/>
 <circle cx="755.4" cy="28.9" r="6.1" stroke-width="1.25"/>
 <path d="M752.3 30.4 Q755.4 34 758.5 30.4" stroke-width="1.3"/>
 <path d="M779.2 27L782.8 30.6L786.4 27" stroke-width="1.8"/>
</g>
<g fill="#e3efe7">
 <rect x="99.8" y="4.8" width="11" height="11" rx="1.2"/>
 <path d="M123.2 8.2V14.3H129.3Z"/>
 <path d="M141.4 8.6H145.4L143.4 11.4Z"/>
 <path d="M764.8 27.6H768.9L766.85 30.6Z"/>
 <ellipse cx="753.5" cy="27" rx="0.75" ry="1.2"/>
 <ellipse cx="757.3" cy="27" rx="0.75" ry="1.2"/>
 <circle cx="776.4" cy="7.5" r="2.5"/>
 <path d="M772.3 15.2 Q772.1 10.8 776.4 10.6 Q780.7 10.8 780.5 15.2Z"/>
 <rect x="779.7" y="8.6" width="6.2" height="1.6"/>
 <rect x="782" y="6.3" width="1.6" height="6.2"/>
 <rect x="94.6" y="8.7" width="0" height="0"/>
</g>
<rect x="101.9" y="6.1" width="6.8" height="4.5" fill="#2d7a4f"/>
<rect x="103.1" y="11.9" width="4.4" height="3.9" fill="#2d7a4f"/>
<rect x="104.0" y="12.9" width="1.5" height="2.9" fill="#e3efe7"/>
<g fill="none" stroke="#6da588" stroke-width="1.3">
 <path d="M164.4 8.6 A4.1 4.1 0 1 1 160.0 7.1"/>
</g>
<path d="M161.6 5.3L165.9 6.0L163.6 9.6Z" fill="#6da588"/>
<g fill="#f2f7f3">
 <rect x="378.3" y="4.6" width="7.8" height="11.3" rx="0.6"/>
</g>
<rect x="378.3" y="4.6" width="7.8" height="1.6" fill="#9fd5a8"/>
<g stroke="#b9cdbf" stroke-width="0.5">
 <line x1="378.3" y1="8.6" x2="386.1" y2="8.6"/><line x1="378.3" y1="11" x2="386.1" y2="11"/><line x1="378.3" y1="13.4" x2="386.1" y2="13.4"/>
 <line x1="381" y1="6.2" x2="381" y2="15.9"/><line x1="383.5" y1="6.2" x2="383.5" y2="15.9"/>
</g>
</svg>
<svg class="a" style="left:0;top:40px" width="160" height="20" viewBox="0 40 160 20">
<path d="M57.6 46.9L60 43.4L62.4 46.9Z M57.6 51.7L60 55.1L62.4 51.7Z" fill="#6b6b6b"/>
<g stroke="#c6c6c6" stroke-width="1.1" fill="none">
 <path d="M78.5 46.3L86.8 53.6M86.8 46.3L78.5 53.6"/>
 <path d="M100.4 50.2L103.9 53.6L110.4 46.3"/>
</g>
</svg>
<div class="t" style="left:124px;top:44.5px;font-family:&quot;Liberation Serif&quot;,serif;font-style:italic;font-size:12.5px;color:#444">fx</div>
<div class="a" style="left:0px;top:530px;width:800px;height:11px;background:#fff"></div>
<div class="a" style="left:785px;top:530px;width:1px;height:12px;background:#c8c8c8"></div>
<div class="a" style="left:0px;top:541px;width:800px;height:21px;background:#efefef;border-top:1px solid #dedede"></div>
<div class="a" style="left:11.7px;top:548.5px;width:0;height:0;border-right:6px solid #8c8c8c;border-top:4px solid transparent;border-bottom:4px solid transparent"></div>
<div class="a" style="left:29.25px;top:548.5px;width:0;height:0;border-left:6px solid #8c8c8c;border-top:4px solid transparent;border-bottom:4px solid transparent"></div>
<div class="a" style="left:47px;top:542.5px;width:1px;height:15.5px;background:#d6d6d6"></div>
<div class="t" style="left:57.00px;top:547.13px;font-size:10px;color:#555;transform:scaleX(0.9724);transform-origin:left center;-webkit-text-stroke:0.15px #555;">Flat-rate Loans</div>
<div class="a" style="left:132.4px;top:541px;width:93px;height:20px;background:#fff;box-shadow:0 1px 1px rgba(0,0,0,0.25)"></div>
<div class="t" style="left:141.50px;top:547.13px;font-size:10px;color:#2b7d4e;font-weight:bold;transform:scaleX(0.9348);transform-origin:left center;">Reducible Loans</div>
<div class="t" style="left:235.00px;top:547.13px;font-size:10px;color:#555;transform:scaleX(0.9685);transform-origin:left center;-webkit-text-stroke:0.15px #555;">Loan Graphs</div>
<div class="a" style="left:300.7px;top:542.5px;width:1px;height:15.5px;background:#d6d6d6"></div>
<div class="t" style="left:311.20px;top:545.50px;font-size:13px;color:#444;-webkit-text-stroke:0.5px #444;">+</div>
<div class="a" style="left:330px;top:542.5px;width:1px;height:15.5px;background:#d6d6d6"></div>
<div class="a" style="left:0px;top:562px;width:800px;height:18px;background:linear-gradient(#dedede,#cfcfcf);border-top:1px solid #b5b5b5"></div>
<div class="t" style="left:19.50px;top:565.86px;font-size:10.5px;color:#6a6a6a;transform:scaleX(0.8994);transform-origin:left center;-webkit-text-stroke:0.15px #6a6a6a;">Ready</div>
<div class="a" style="left:576.5px;top:563px;width:28.5px;height:17px;background:#ababab"></div>
<div class="t" style="left:755.00px;top:565.86px;font-size:10.5px;color:#555;transform:scaleX(0.9779);transform-origin:left center;-webkit-text-stroke:0.15px #555;">110%</div>
<div class="a" style="left:651px;top:570px;width:78px;height:3px;border-radius:1.5px;background:#9a9a9a"></div>
<div class="a" style="left:686.8px;top:566.6px;width:8.8px;height:8.8px;border-radius:50%;background:#fff;box-shadow:0 0 0.8px rgba(0,0,0,.45)"></div>
<svg class="a" style="left:570px;top:560px" width="230" height="20" viewBox="570 560 230 20">
<g stroke="#ffffff" stroke-width="1" fill="none">
 <rect x="586.2" y="566.6" width="9.4" height="8.8"/>
 <line x1="589.3" y1="566.6" x2="589.3" y2="575.4"/><line x1="592.5" y1="566.6" x2="592.5" y2="575.4"/>
 <line x1="586.2" y1="569.5" x2="595.6" y2="569.5"/><line x1="586.2" y1="572.5" x2="595.6" y2="572.5"/>
</g>
<g stroke="#6e6e6e" stroke-width="1" fill="none">
 <rect x="613.2" y="566.6" width="10.4" height="8.8"/>
 <path d="M615.6 567.8V574.2M621.2 567.8V574.2"/>
 <rect x="616.8" y="569" width="3.2" height="4"/>
</g>
<rect x="639.2" y="570.6" width="5.6" height="1.3" fill="#6e6e6e"/>
<rect x="735.3" y="570.7" width="6.1" height="1.4" fill="#6e6e6e"/>
<rect x="737.65" y="568.3" width="1.4" height="6.2" fill="#6e6e6e"/>
</svg></body></html>
